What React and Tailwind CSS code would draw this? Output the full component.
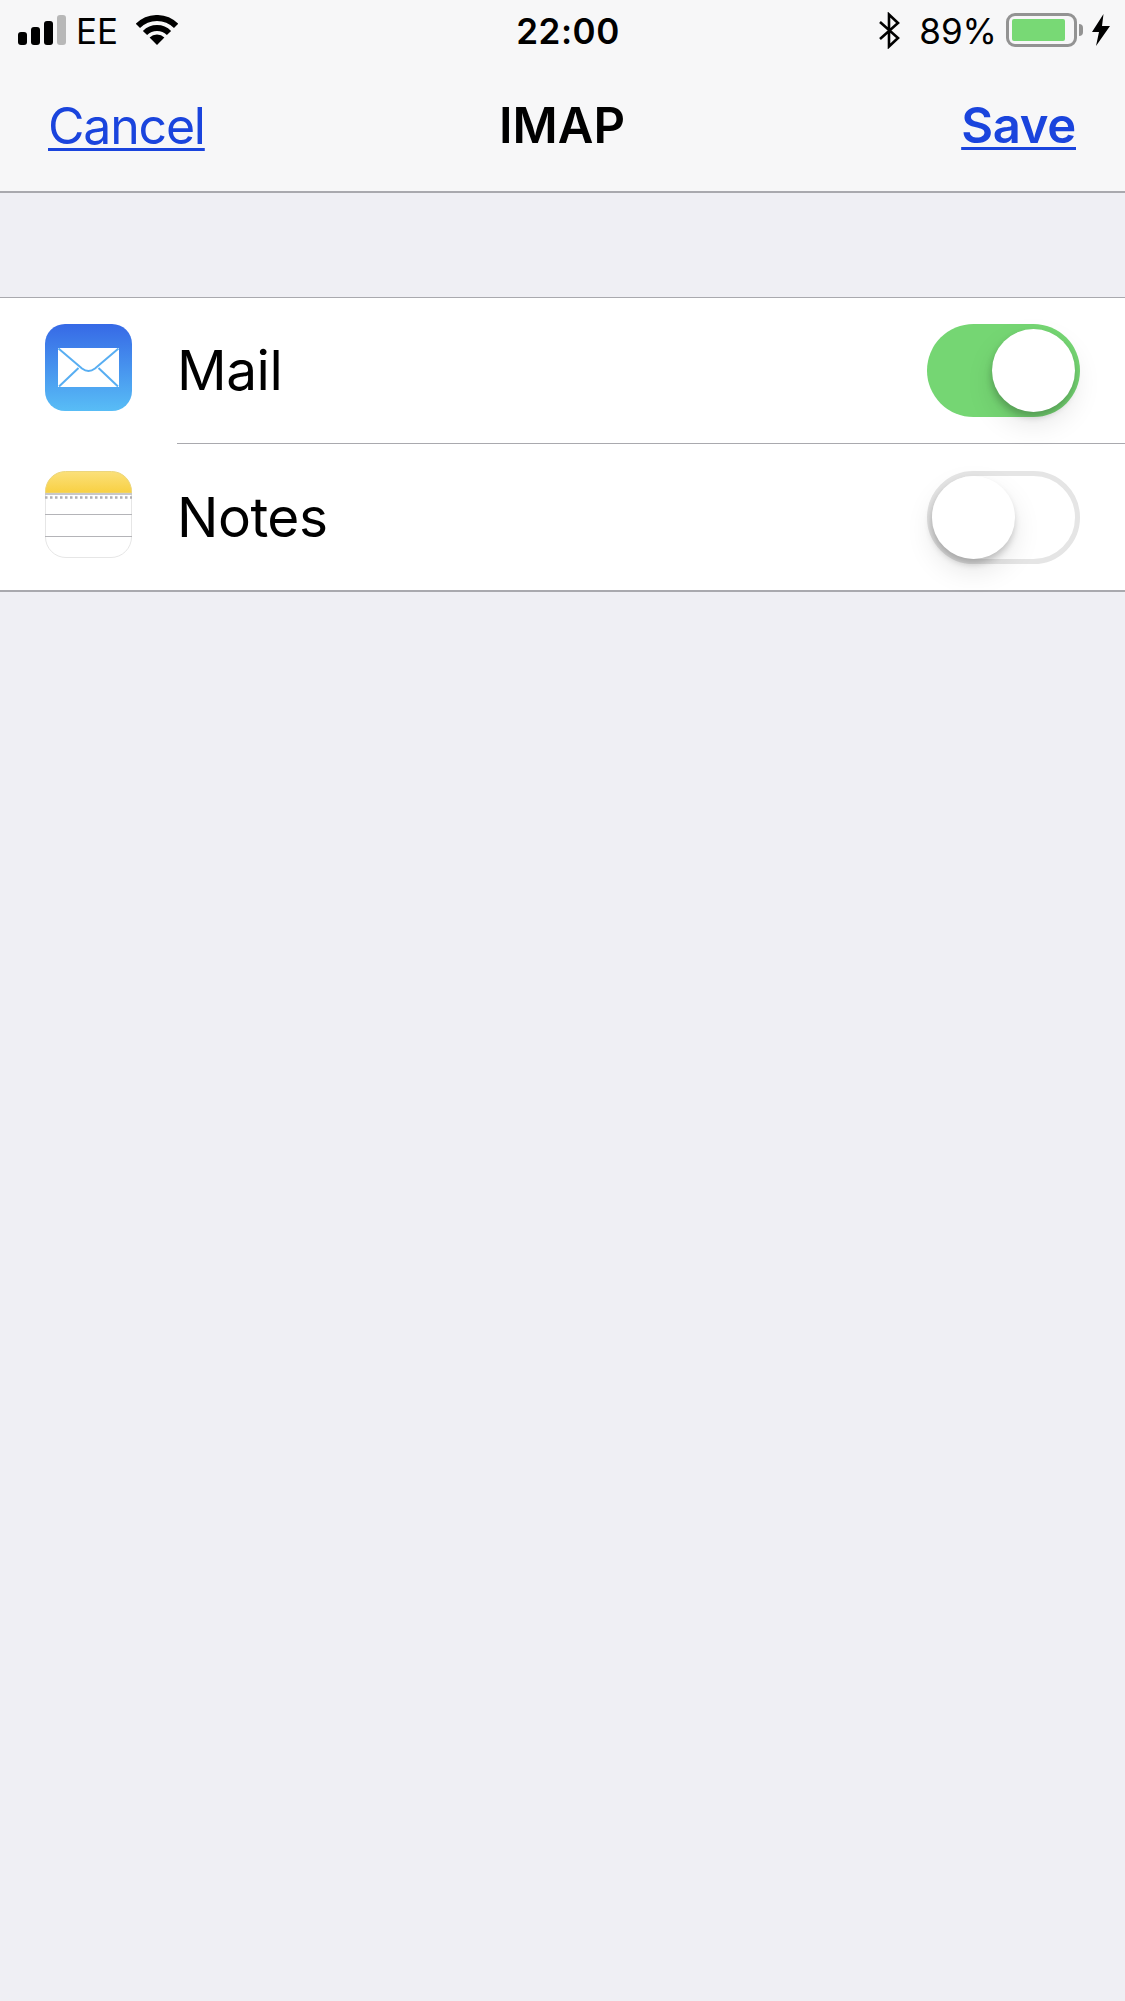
const BORDER = 'border-[#a9a9ae]';

function SignalBars() {
  return (
    <svg width="48" height="30" viewBox="0 0 48 30" className="shrink-0">
      <rect x="0" y="17" width="9" height="13" rx="3" fill="#000" />
      <rect x="13" y="12" width="9" height="18" rx="3" fill="#000" />
      <rect x="26" y="6" width="9" height="24" rx="3" fill="#000" />
      <rect x="39" y="0" width="9" height="30" rx="3" fill="#b8b8b8" />
    </svg>
  );
}

function WifiIcon() {
  return (
    <svg width="42" height="30" viewBox="0 0 42 30" className="shrink-0" fill="none">
      <path d="M1.9 10.9A27 27 0 0 1 40.1 10.9" stroke="#000" strokeWidth="6" />
      <path d="M9 18A17 17 0 0 1 33 18" stroke="#000" strokeWidth="6" />
      <path d="M21 30L13.6 22.6A10.5 10.5 0 0 1 28.4 22.6Z" fill="#000" />
    </svg>
  );
}

function BluetoothIcon() {
  return (
    <svg width="21" height="37" viewBox="0 0 21 37" className="shrink-0" fill="none">
      <path d="M1 10L19 26L10 34.5V2.5L19 11L1 27" stroke="#000" strokeWidth="2.6" />
    </svg>
  );
}

function Battery() {
  return (
    <div className="flex items-center shrink-0">
      <div className="w-[71px] h-[34px] rounded-[9px] border-[3px] border-[#939393] p-[3px]">
        <div className="w-[53px] h-[22px] rounded-[2px] bg-[#78d975]" />
      </div>
      <div className="w-[4px] h-[12px] rounded-r-[4px] bg-[#939393] ml-[2px]" />
    </div>
  );
}

function BoltIcon() {
  return (
    <svg width="18" height="32" viewBox="0 0 18 32" className="shrink-0">
      <path d="M11.5 0L0 18H7L4 32L18 12H10Z" fill="#000" />
    </svg>
  );
}

function MailIcon() {
  return (
    <svg width="87" height="87" viewBox="0 0 87 87" className="shrink-0 mb-[7px]">
      <defs>
        <linearGradient id="mailBg" x1="0" y1="0" x2="0" y2="1">
          <stop offset="0" stopColor="#3669e6" />
          <stop offset="1" stopColor="#58bdf6" />
        </linearGradient>
      </defs>
      <rect width="87" height="87" rx="20" fill="url(#mailBg)" />
      <rect x="13" y="24" width="61" height="39" fill="#fff" />
      <path
        d="M13.5 24.5L37 44.5C41 47.5 46 47.5 50 44.5L73.5 24.5M14 62.5L33.5 44M73 62.5L53.5 44"
        fill="none"
        stroke="#58aef2"
        strokeWidth="2"
      />
    </svg>
  );
}

function NotesIcon() {
  return (
    <svg width="87" height="87" viewBox="0 0 87 87" className="shrink-0 mb-[5px]">
      <defs>
        <linearGradient id="notesTop" x1="0" y1="0" x2="0" y2="1">
          <stop offset="0" stopColor="#fbe07a" />
          <stop offset="1" stopColor="#f8d042" />
        </linearGradient>
      </defs>
      <path d="M.5 22V21A20 20 0 0 1 20.5 .5H66.5A20 20 0 0 1 86.5 21V22Z" fill="url(#notesTop)" stroke="#ecd67d" strokeWidth="1" />
      <path d="M.5 23V66A20.5 20.5 0 0 0 21 86.5H66A20.5 20.5 0 0 0 86.5 66V23" fill="#fff" stroke="#e6e6e6" strokeWidth="1" />
      <rect x="0" y="22" width="87" height="2" fill="#c8c8c8" />
      <line x1="0" y1="26.5" x2="87" y2="26.5" stroke="#b0b0b4" strokeWidth="2.5" strokeDasharray="2.5 2.5" />
      <rect x="0" y="43" width="87" height="1" fill="#b4b4b8" />
      <rect x="0" y="65" width="87" height="1" fill="#b4b4b8" />
    </svg>
  );
}

function Toggle({ on }) {
  return (
    <div
      className={
        on
          ? 'flex items-center justify-end w-[153px] h-[93px] rounded-full bg-[#75d673] pr-[5px]'
          : 'flex items-center justify-start w-[153px] h-[93px] rounded-full bg-white border-[5px] border-[#e5e5e5]'
      }
    >
      <div className="w-[83px] h-[83px] rounded-full bg-white shadow-[0_12px_28px_rgba(0,0,0,0.1),-1px_5px_7px_rgba(0,0,0,0.2)]" />
    </div>
  );
}

function Row({ icon, label, on, last }) {
  return (
    <div className="flex items-center h-[146px] pl-[45px]">
      {icon}
      <div className={`flex flex-1 items-center self-stretch ml-[45px] pr-[45px] ${last ? '' : `border-b pb-[1px] ${BORDER}`}`}>
        <span className="flex-1 text-[55px] leading-none tracking-[-0.5px] text-black">{label}</span>
        <Toggle on={on} />
      </div>
    </div>
  );
}

export default function App() {
  return (
    <div className="min-h-[2001px] bg-[#efeff4] font-['Inter',sans-serif] text-black overflow-hidden">
      <header className={`bg-[#f7f7f8] h-[193px] border-b-[2px] ${BORDER}`}>
        <div className="grid grid-cols-[1fr_auto_1fr] items-center h-[60px] px-[15px]">
          <div className="flex items-center">
            <div className="ml-[3px]"><SignalBars /></div>
            <span className="text-[35px] leading-none ml-[10px] mt-[2px]">EE</span>
            <div className="ml-[18px]"><WifiIcon /></div>
          </div>
          <span className="text-[35px] leading-none font-semibold tracking-[0.5px] ml-[11px] mt-[2px]">22:00</span>
          <div className="flex items-center justify-end">
            <BluetoothIcon />
            <span className="text-[35px] leading-none ml-[19px] mt-[2px]">89%</span>
            <div className="ml-[9px]"><Battery /></div>
            <div className="ml-[9px]"><BoltIcon /></div>
          </div>
        </div>
        <nav className="grid grid-cols-[1fr_auto_1fr] items-center h-[132px] pl-[48px] pr-[49px] pb-[1px]">
          <a className="text-[50px] leading-none tracking-[-1.2px] text-[#1a44dd] underline decoration-[3px] underline-offset-[4px]">Cancel</a>
          <h1 className="text-[49px] leading-none font-semibold">IMAP</h1>
          <a className="text-[49px] leading-none font-semibold tracking-[-0.3px] text-[#1a44dd] text-right underline decoration-[3px] underline-offset-[4px]">Save</a>
        </nav>
      </header>
      <section className={`mt-[104px] bg-white border-t border-b-[2px] ${BORDER}`}>
        <Row icon={<MailIcon />} label="Mail" on />
        <Row icon={<NotesIcon />} label="Notes" on={false} last />
      </section>
    </div>
  );
}
